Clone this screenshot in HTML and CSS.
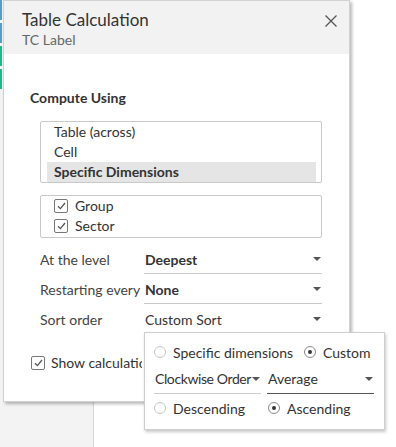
FILE: index.html
```html
<!DOCTYPE html>
<html>
<head>
<meta charset="utf-8">
<link rel="stylesheet" href="styles.css">
</head>
<body>
<div class="page">
  <div class="side">
    <div class="bars">
      <span class="bar blue"></span>
      <span class="bar blue"></span>
      <span class="bar green"></span>
      <span class="bar green"></span>
    </div>
  </div>
  <div class="main"></div>

  <div class="dialog">
    <div class="dlg-head">
      <div class="titles">
        <div class="title">Table Calculation</div>
        <div class="subtitle">TC Label</div>
      </div>
      <svg class="close" width="12" height="12" viewBox="0 0 12 12"><path d="M0.5 0.5 L11.5 11.5 M11.5 0.5 L0.5 11.5" stroke="#555" stroke-width="1.3" fill="none"/></svg>
    </div>
    <div class="dlg-body">
      <div class="section-title">Compute Using</div>
      <div class="listbox">
        <div class="item">Table (across)</div>
        <div class="item">Cell</div>
        <div class="item selected">Specific Dimensions</div>
      </div>
      <div class="checkbox-box">
        <div class="check-row"><span class="cb"><svg width="9" height="8" viewBox="0 0 9 8"><path d="M1 4.2 L3.4 6.6 L8 1" stroke="#555" stroke-width="1.3" fill="none"/></svg></span>Group</div>
        <div class="check-row"><span class="cb"><svg width="9" height="8" viewBox="0 0 9 8"><path d="M1 4.2 L3.4 6.6 L8 1" stroke="#555" stroke-width="1.3" fill="none"/></svg></span>Sector</div>
      </div>
      <div class="fields">
        <div class="field">
          <span class="label">At the level</span>
          <span class="select bold">Deepest<i class="arrow"></i></span>
        </div>
        <div class="field">
          <span class="label">Restarting every</span>
          <span class="select bold">None<i class="arrow"></i></span>
        </div>
        <div class="field">
          <span class="label">Sort order</span>
          <span class="select">Custom Sort<i class="arrow"></i></span>
        </div>
      </div>
      <div class="show-row"><span class="cb"><svg width="9" height="8" viewBox="0 0 9 8"><path d="M1 4.2 L3.4 6.6 L8 1" stroke="#555" stroke-width="1.3" fill="none"/></svg></span><span class="show-label">Show calculation assistance</span></div>
    </div>
  </div>

  <div class="popup">
    <div class="prow">
      <span class="radio"></span><span class="rlabel wide">Specific dimensions</span>
      <span class="radio on"></span><span class="rlabel">Custom</span>
    </div>
    <div class="prow selects">
      <span class="psel first"><span class="tight">Clockwise Order</span><i class="arrow"></i></span>
      <span class="psel second"><span>Average</span><i class="arrow"></i></span>
    </div>
    <div class="prow">
      <span class="radio"></span><span class="rlabel wide2">Descending</span>
      <span class="radio on"></span><span class="rlabel">Ascending</span>
    </div>
  </div>
</div>
</body>
</html>
```
FILE: styles.css
```css
* { box-sizing: border-box; }
html, body { margin: 0; padding: 0; background: #fff; }
body {
  font-family: "Lato", "Liberation Sans", sans-serif;
  font-size: 14px;
  color: #333;
  width: 396px;
  height: 447px;
  overflow: hidden;
}
.page {
  position: relative;
  width: 396px;
  height: 447px;
  display: flex;
}
.side {
  width: 94px;
  height: 447px;
  background: #f3f3f3;
  border-right: 1px solid #d6d6d6;
}
.bars { display: flex; flex-direction: column; gap: 3px; width: 2px; }
.bar { display: block; height: 20px; width: 2px; }
.bar.blue { background: #5b9ac4; }
.bar.green { background: #1fb58f; }
.main { flex: 1; background: #fff; }

.dialog {
  position: absolute;
  left: 3px;
  top: 0;
  width: 347px;
  height: 402px;
  background: #fff;
  border: 1px solid #d2d2d2;
  box-shadow: 2px 2px 3px rgba(0,0,0,0.28);
}
.dlg-head {
  height: 53px;
  background: #f2f2f2;
  display: flex;
  justify-content: space-between;
  align-items: flex-start;
  padding: 8px 12px 0 18px;
}
.title { font-size: 17px; line-height: 22px; color: #333; }
.subtitle { font-size: 14px; line-height: 17px; color: #666; }
.close { margin-top: 6px; }

.dlg-body { padding: 35px 27px 0 26px; }
.section-title { font-weight: bold; font-size: 14px; line-height: 18px; color: #333; }
.listbox {
  margin: 14px 0 0 10px;
  width: 282px;
  border: 1px solid #c9c9c9;
  border-radius: 2px;
  padding: 0 5px 0 6px;
}
.item { height: 20px; line-height: 19px; padding-left: 7px; }
.item.selected { background: #e5e5e5; font-weight: bold; }
.checkbox-box {
  margin: 12px 0 0 10px;
  width: 282px;
  height: 43px;
  border: 1px solid #c9c9c9;
  border-radius: 2px;
  padding: 0 0 0 13px;
}
.check-row { height: 20px; display: flex; align-items: center; line-height: 16px; }
.cb {
  width: 14px; height: 14px;
  border: 1px solid #777;
  border-radius: 2px;
  display: inline-flex; align-items: center; justify-content: center;
  margin-right: 7px;
  background: #fff;
  flex: none;
}
.fields { margin: 6px 0 0 10px; width: 282px; }
.field { display: flex; height: 30px; align-items: stretch; }
.label { width: 104px; display: flex; align-items: center; padding-top: 1px; color: #444; white-space: nowrap; }
.select {
  flex: 1;
  display: flex; align-items: center; justify-content: space-between;
  border-bottom: 1px solid #c9c9c9;
  padding: 1px 0 0 1px;
}
.select.bold { font-weight: bold; }
.arrow {
  display: inline-block;
  flex: none;
  width: 0; height: 0;
  border-left: 4px solid transparent;
  border-right: 4px solid transparent;
  border-top: 4px solid #555;
  margin-right: 1px;
}
.show-row { margin-top: 20px; display: flex; align-items: center; white-space: nowrap; }
.show-row .cb { margin-left: 1px; margin-right: 6px; }
.show-label { width: 91px; overflow: hidden; }

.popup {
  position: absolute;
  left: 144px;
  top: 332px;
  width: 241px;
  height: 98px;
  background: #fff;
  border: 1px solid #cfcfcf;
  box-shadow: 1px 2px 3px rgba(0,0,0,0.22);
  padding: 8px 9px 0 9px;
}
.prow { display: flex; align-items: center; height: 22px; white-space: nowrap; }
.radio {
  width: 12px; height: 12px;
  border: 1px solid #c4c4c4;
  border-radius: 50%;
  display: inline-flex; align-items: center; justify-content: center;
  margin-right: 7px;
  flex: none;
}
.radio.on { border-color: #888; }
.radio.on::after { content: ""; width: 4px; height: 4px; background: #333; border-radius: 50%; }
.rlabel { color: #333; }
.rlabel.wide { width: 131px; }
.rlabel.wide2 { width: 95px; }
.prow.selects { height: 34px; align-items: stretch; }
.psel {
  display: flex; align-items: center; justify-content: space-between;
  padding: 1px 0 0 1px;
  border-bottom: 1px solid #ccc;
  margin-bottom: 3px;
  white-space: nowrap;
}
.tight { letter-spacing: -0.4px; }
.psel.first { width: 107px; margin-right: 6px; }
.psel.second { width: 107px; border-bottom-color: #555; }
.psel .arrow { margin-right: 1px; }
```
